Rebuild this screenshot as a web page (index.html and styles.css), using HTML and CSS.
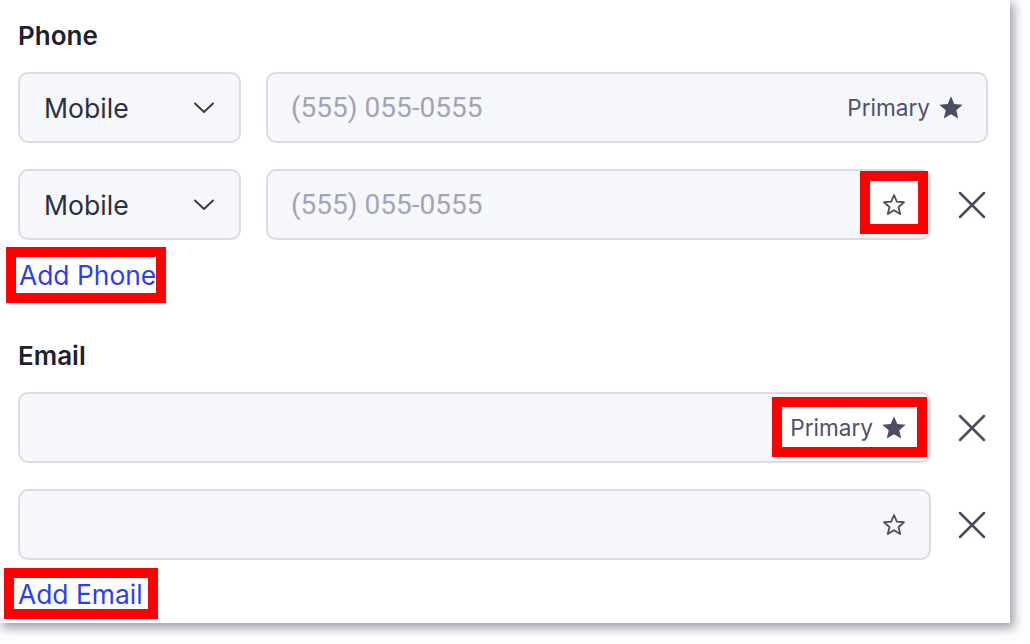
FILE: index.html
```html
<!DOCTYPE html>
<html lang="en">
<head>
<meta charset="utf-8">
<title>Contact details</title>
<link rel="stylesheet" href="styles.css">
</head>
<body>
<div class="card">
  <section class="group">
    <h2 class="group-title">Phone</h2>
    <div class="rows">
      <div class="row">
        <div class="select">
          <span class="select-value">Mobile</span>
          <svg class="chevron" width="20" height="12" viewBox="0 0 20 12"><path d="M1 1.5 L10 10 L19 1.5" fill="none" stroke="#3a3b4d" stroke-width="2" stroke-linecap="round" stroke-linejoin="round"/></svg>
        </div>
        <div class="field">
          <input class="field-input phone-input" type="text" placeholder="(555) 055-0555">
          <div class="action">
            <span class="primary-label">Primary</span>
            <svg class="star" width="28" height="28" viewBox="0 0 24 24"><path d="M12 17.27L18.18 21l-1.64-7.03L22 9.24l-7.19-.61L12 2 9.19 8.63 2 9.24l5.46 4.73L5.82 21z" fill="#4c4d62"/></svg>
          </div>
        </div>
      </div>
      <div class="row">
        <div class="select">
          <span class="select-value">Mobile</span>
          <svg class="chevron" width="20" height="12" viewBox="0 0 20 12"><path d="M1 1.5 L10 10 L19 1.5" fill="none" stroke="#3a3b4d" stroke-width="2" stroke-linecap="round" stroke-linejoin="round"/></svg>
        </div>
        <div class="field">
          <input class="field-input phone-input" type="text" placeholder="(555) 055-0555">
          <div class="action">
            <span class="mark mark-star">
              <svg class="star" width="28" height="28" viewBox="-2 -2 28 28"><path d="M12 17.27L18.18 21l-1.64-7.03L22 9.24l-7.19-.61L12 2 9.19 8.63 2 9.24l5.46 4.73L5.82 21z" fill="none" stroke="#4c4d62" stroke-width="1.8" stroke-linejoin="round"/></svg>
            </span>
          </div>
        </div>
        <button class="remove" type="button" aria-label="Remove">
          <svg width="28" height="28" viewBox="0 0 28 28"><path d="M2 2 L26 26 M26 2 L2 26" stroke="#4a4b5d" stroke-width="2.5" stroke-linecap="round"/></svg>
        </button>
      </div>
    </div>
    <div class="add-wrap"><a class="add-link mark mark-phone" href="#">Add Phone</a></div>
  </section>

  <section class="group group-email">
    <h2 class="group-title">Email</h2>
    <div class="rows">
      <div class="row">
        <div class="field">
          <input class="field-input" type="text">
          <div class="action">
            <span class="mark mark-primary">
              <span class="primary-label">Primary</span>
              <svg class="star" width="28" height="28" viewBox="0 0 24 24"><path d="M12 17.27L18.18 21l-1.64-7.03L22 9.24l-7.19-.61L12 2 9.19 8.63 2 9.24l5.46 4.73L5.82 21z" fill="#4c4d62"/></svg>
            </span>
          </div>
        </div>
        <button class="remove" type="button" aria-label="Remove">
          <svg width="28" height="28" viewBox="0 0 28 28"><path d="M2 2 L26 26 M26 2 L2 26" stroke="#4a4b5d" stroke-width="2.5" stroke-linecap="round"/></svg>
        </button>
      </div>
      <div class="row">
        <div class="field">
          <input class="field-input" type="text">
          <div class="action">
            <svg class="star" width="28" height="28" viewBox="-2 -2 28 28"><path d="M12 17.27L18.18 21l-1.64-7.03L22 9.24l-7.19-.61L12 2 9.19 8.63 2 9.24l5.46 4.73L5.82 21z" fill="none" stroke="#4c4d62" stroke-width="1.8" stroke-linejoin="round"/></svg>
          </div>
        </div>
        <button class="remove" type="button" aria-label="Remove">
          <svg width="28" height="28" viewBox="0 0 28 28"><path d="M2 2 L26 26 M26 2 L2 26" stroke="#4a4b5d" stroke-width="2.5" stroke-linecap="round"/></svg>
        </button>
      </div>
    </div>
    <div class="add-wrap add-wrap-email"><a class="add-link mark mark-email" href="#">Add Email</a></div>
  </section>
</div>
</body>
</html>
```

FILE: styles.css
```css
* { box-sizing: border-box; }

html, body {
  margin: 0;
  padding: 0;
  background: #ffffff;
}

body {
  font-family: "Inter", "Roboto", "Liberation Sans", sans-serif;
  width: 1030px;
  height: 644px;
  overflow: hidden;
}

.card {
  width: 1010px;
  height: 623px;
  background: #ffffff;
  padding: 20px 22px 0 18px;
  box-shadow: 3px 4px 10px 1px rgba(70, 74, 105, 0.55);
}

.group-title {
  margin: 0;
  font-size: 26px;
  line-height: 32px;
  font-weight: 600;
  color: #1f202e;
}

.group-email {
  margin-top: 47px;
}

.rows {
  margin-top: 20px;
  display: flex;
  flex-direction: column;
  gap: 26px;
}

.row {
  display: flex;
  align-items: center;
  height: 71px;
}

.select {
  width: 223px;
  height: 71px;
  flex: none;
  display: flex;
  align-items: center;
  justify-content: space-between;
  padding: 0 25px 0 24px;
  background: #f6f7fb;
  border: 2px solid #dadbe7;
  border-radius: 10px;
  margin-right: 25px;
}

.select-value {
  font-size: 26.6px;
  color: #2d2e3f;
}

.chevron { display: block; }

.field {
  flex: 1;
  height: 71px;
  display: flex;
  align-items: center;
  background: #f6f7fb;
  border: 2px solid #dadbe7;
  border-radius: 10px;
  min-width: 0;
}

.field-input {
  flex: 1;
  min-width: 0;
  height: 100%;
  border: none;
  outline: none;
  background: transparent;
  padding: 0 0 0 23px;
  font-family: "Roboto", "Liberation Sans", sans-serif;
  font-size: 28px;
  color: #2d2e3f;
}

.field-input::placeholder {
  color: #a3a4b6;
  opacity: 1;
}

.action {
  display: flex;
  align-items: center;
  margin-right: 21px;
  flex: none;
}

.primary-label {
  font-size: 22.6px;
  line-height: 24px;
  color: #50516a;
  margin-right: 7px;
}

.star { display: block; }

.remove {
  flex: none;
  width: 32px;
  height: 32px;
  margin-left: 25px;
  padding: 0;
  border: none;
  background: transparent;
  display: flex;
  align-items: center;
  justify-content: center;
}

.remove svg { display: block; }

/* red annotation boxes */
.mark {
  background: #ffffff;
  outline: 10px solid #ff0000;
}

.mark-star {
  display: flex;
  padding: 10px 10px 5px 10px;
  margin: -10px -10px -5px -10px;
}

.mark-primary {
  display: flex;
  align-items: center;
  padding: 7px 9px 5px 8px;
  margin: -7px -9px -5px -8px;
}

.add-wrap {
  margin-top: 17px;
}

.add-wrap-email {
  margin-top: 18px;
}

.add-link {
  display: inline-block;
  font-size: 26.4px;
  color: #2b3ef2;
  text-decoration: none;
}

.mark-phone {
  line-height: 36px;
  padding: 0 0 0 3px;
  margin-left: -2px;
}

.mark-email {
  line-height: 29px;
  padding: 2px 5px 0 4px;
  margin-left: -4px;
}
```
